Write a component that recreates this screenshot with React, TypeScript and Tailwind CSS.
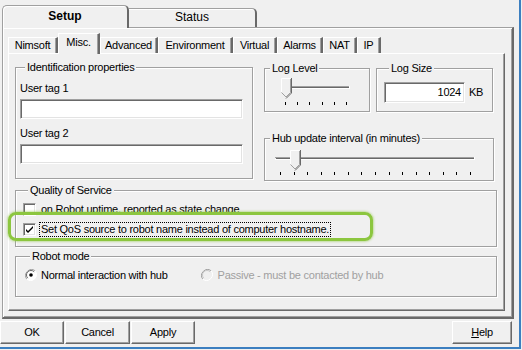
import React from 'react';

const raised =
  'border border-t-white border-l-white border-r-[#696969] border-b-[#696969] shadow-[inset_-1px_-1px_0_#a0a0a0]';
const sunken =
  'border border-t-[#a0a0a0] border-l-[#a0a0a0] border-r-white border-b-white shadow-[inset_1px_1px_0_#696969,inset_-1px_-1px_0_#e3e3e3]';

type BoxProps = { label: string; className?: string; children?: React.ReactNode };

const GroupBox = ({ label, className = '', children }: BoxProps) => (
  <fieldset className={`border border-[#a0a0a0] shadow-[1px_1px_0_#fff,inset_1px_1px_0_#fff] ${className}`}>
    <legend className="ml-[5px] px-[2px] leading-[13px] bg-[#f0f0f0] relative">{label}</legend>
    {children}
  </fieldset>
);

type SliderProps = {
  width: number;
  height: number;
  x1: number;
  x2: number;
  ty: number;
  thumbX: number;
  thumbY: number;
  ticks: number[];
  tickY: number;
};

const Slider = ({ width, height, x1, x2, ty, thumbX: x, thumbY: y, ticks, tickY }: SliderProps) => (
  <svg width={width} height={height} className="block">
    {/* groove */}
    <rect x={x1} y={ty - 1} width={x2 - x1} height={1} fill="#a0a0a0" />
    <rect x={x1 + 1} y={ty} width={x2 - x1 - 2} height={1} fill="#696969" />
    <rect x={x1} y={ty + 1} width={x2 - x1} height={1} fill="#ffffff" />
    <rect x={x2 - 1} y={ty - 1} width={1} height={3} fill="#ffffff" />
    {/* thumb */}
    <path d={`M${x + 0.5} ${y + 0.5} H${x + 9.5} V${y + 14.5} L${x + 5} ${y + 19} L${x + 0.5} ${y + 14.5} Z`} fill="#f0f0f0" />
    <path d={`M${x + 0.5} ${y + 14.5} V${y + 0.5} H${x + 9.5}`} stroke="#fff" fill="none" />
    <path d={`M${x + 9.5} ${y + 1} V${y + 14.5} L${x + 5} ${y + 19}`} stroke="#a0a0a0" fill="none" />
    <path d={`M${x + 10.5} ${y} V${y + 15} L${x + 5} ${y + 20.5}`} stroke="#696969" fill="none" />
    <path d={`M${x + 0.5} ${y + 14.5} L${x + 5} ${y + 19}`} stroke="#a0a0a0" fill="none" />
    {ticks.map((t) => (
      <rect key={t} x={Math.round(t)} y={tickY} width={1} height={3} fill="#000" />
    ))}
  </svg>
);

const Check = ({ checked }: { checked?: boolean }) => (
  <div className={`w-[13px] h-[13px] bg-white shrink-0 ${sunken} flex items-center justify-center`}>
    {checked && (
      <svg width="9" height="9" viewBox="0 0 9 9">
        <path d="M1 4 L3 6 L8 1 V3 L3 8 L1 6 Z" fill="#000" />
      </svg>
    )}
  </div>
);

const Radio = ({ checked, disabled }: { checked?: boolean; disabled?: boolean }) => (
  <svg width="12" height="12" viewBox="0 0 12 12" className="shrink-0">
    <circle cx="6" cy="6" r="5.5" fill={disabled ? '#f0f0f0' : '#fff'} />
    <path d="M1.8 10.2 A6 6 0 0 1 10.2 1.8" stroke="#a0a0a0" fill="none" />
    <path d="M2.8 9.2 A4.5 4.5 0 0 1 9.2 2.8" stroke={disabled ? '#c8c8c8' : '#696969'} fill="none" />
    <path d="M1.8 10.2 A6 6 0 0 0 10.2 1.8" stroke="#fff" fill="none" />
    {checked && <circle cx="6" cy="6" r="1.8" fill="#000" />}
  </svg>
);

const innerTabs = [
  { name: 'Nimsoft', w: 'w-[50px]' },
  { name: 'Misc.', w: 'w-[42px]', active: true },
  { name: 'Advanced', w: 'w-[58px]' },
  { name: 'Environment', w: 'w-[75px]' },
  { name: 'Virtual', w: 'w-[44px]' },
  { name: 'Alarms', w: 'w-[46px]' },
  { name: 'NAT', w: 'w-[34px]' },
  { name: 'IP', w: 'w-[24px]' },
];

const hubTicks = Array.from({ length: 15 }, (_, i) => 15 + i * 13.57);
const levelTicks = [20, 32, 44, 57, 69, 81];

const App = () => {
  return (
    <div className="w-[522px] h-[350px] bg-[#f0f0f0] overflow-hidden text-[11px] leading-[13px] tracking-[-0.25px] text-black font-['Liberation_Sans',sans-serif]">
      <div className="w-[521px] h-[349px] border-r-2 border-b-2 border-[#3c7fc0] relative">
        {/* Top tabs */}
        <div className="flex items-end h-[27px]">
          <div className="ml-[2px] w-[127px] h-[23px] -mb-px relative z-10 bg-[#f0f0f0] border-l border-t border-[#a0a0a0] border-r-2 border-r-[#696969] rounded-t-[5px] shadow-[inset_1px_1px_0_#fff] text-center pt-[4px] font-bold text-[12px] tracking-normal">
            Setup
          </div>
          <div className="w-[128px] h-[19px] border-t border-[#a0a0a0] border-r-2 border-r-[#696969] rounded-tr-[5px] shadow-[inset_0_1px_0_#fff] text-center pt-[2px] text-[12px] tracking-normal">
            Status
          </div>
        </div>

        {/* Setup panel */}
        <div className="ml-[2px] w-[512px] h-[292px] border-l border-t border-[#a0a0a0] border-r-2 border-b-2 border-r-[#696969] border-b-[#696969] shadow-[inset_1px_1px_0_#fff,inset_-1px_-1px_0_#a0a0a0] pl-[5px] pt-[5px]">
          {/* inner tabs */}
          <div className="flex items-end h-[20px]">
            {innerTabs.map((t) =>
              t.active ? (
                <div
                  key={t.name}
                  className={`${t.w} h-[21px] -mb-px relative z-10 bg-[#f0f0f0] border-l border-t border-white border-r-2 border-r-[#696969] shadow-[inset_-1px_0_0_#a0a0a0] text-center pt-[2px]`}
                >
                  {t.name}
                </div>
              ) : (
                <div
                  key={t.name}
                  className={`${t.w} h-[16px] border-l border-t border-white border-r-2 border-r-[#696969] shadow-[inset_-1px_0_0_#a0a0a0] text-center pt-[1px]`}
                >
                  {t.name}
                </div>
              )
            )}
          </div>

          {/* Misc page */}
          <div className={`w-[497px] h-[258px] ${raised} pl-[6px] pt-[7px]`}>
            <div className="flex">
              <GroupBox label="Identification properties" className="w-[238px] h-[118px] pl-[4px]">
                <div className="mt-[8px]">User tag 1</div>
                <div className={`mt-[4px] w-[223px] h-[20px] bg-white ${sunken}`} />
                <div className="mt-[8px]">User tag 2</div>
                <div className={`mt-[4px] w-[223px] h-[20px] bg-white ${sunken}`} />
              </GroupBox>

              <div className="ml-[11px] mt-[1px] flex flex-col">
                <div className="flex">
                  <GroupBox label="Log Level" className="w-[106px] h-[50px]">
                    <Slider width={104} height={34} x1={17} x2={85} ty={12} thumbX={16} thumbY={3} ticks={levelTicks} tickY={27} />
                  </GroupBox>
                  <GroupBox label="Log Size" className="ml-[6px] w-[117px] h-[50px] pl-[7px]">
                    <div className="mt-[7px] flex items-center">
                      <div className={`w-[81px] h-[21px] bg-white ${sunken} text-right pr-[3px] pt-[3px]`}>1024</div>
                      <span className="ml-[4px]">KB</span>
                    </div>
                  </GroupBox>
                </div>
                <GroupBox label="Hub update interval (in minutes)" className="mt-[20px] w-[230px] h-[49px]">
                  <Slider width={228} height={32} x1={10} x2={210} ty={13} thumbX={25} thumbY={5} ticks={hubTicks} tickY={27} />
                </GroupBox>
              </div>
            </div>

            <GroupBox label="Quality of Service" className="mt-[3px] w-[482px] h-[63px] pl-[7px]">
              <div className="mt-[6px] flex items-center h-[13px]">
                <Check />
                <span className="ml-[5px]">on Robot uptime, reported as state change</span>
              </div>
              <div className="mt-[7px] flex items-center h-[13px]">
                <Check checked />
                <span className="ml-[4px] px-[1px] outline outline-1 outline-dotted outline-black">
                  Set QoS source to robot name instead of computer hostname.
                </span>
              </div>
            </GroupBox>

            <GroupBox label="Robot mode" className="mt-[3px] w-[482px] h-[47px] pl-[9px]">
              <div className="mt-[6px] flex items-center h-[12px]">
                <Radio checked />
                <span className="ml-[4px]">Normal interaction with hub</span>
                <div className="ml-[33px] flex items-center">
                  <Radio disabled />
                  <span className="ml-[5px] text-[#a0a0a0]">Passive - must be contacted by hub</span>
                </div>
              </div>
            </GroupBox>
          </div>
        </div>

        {/* Buttons */}
        <div className="mt-[2px] flex pr-[7px]">
          <button className={`w-[64px] h-[23px] ${raised}`}>OK</button>
          <button className={`ml-[1px] w-[65px] h-[23px] ${raised}`}>Cancel</button>
          <button className={`ml-[1px] w-[64px] h-[23px] ${raised}`}>Apply</button>
          <button className={`ml-auto w-[60px] h-[23px] ${raised}`}>
            <span className="underline">H</span>elp
          </button>
        </div>

        {/* highlight annotation */}
        <div className="absolute left-[8px] top-[212px] w-[365px] h-[29px] border-[3px] border-[#8cc63f] rounded-[8px] shadow-[0_0_2px_1px_rgba(140,198,63,0.45)] pointer-events-none" />
      </div>
    </div>
  );
};

export default App;
